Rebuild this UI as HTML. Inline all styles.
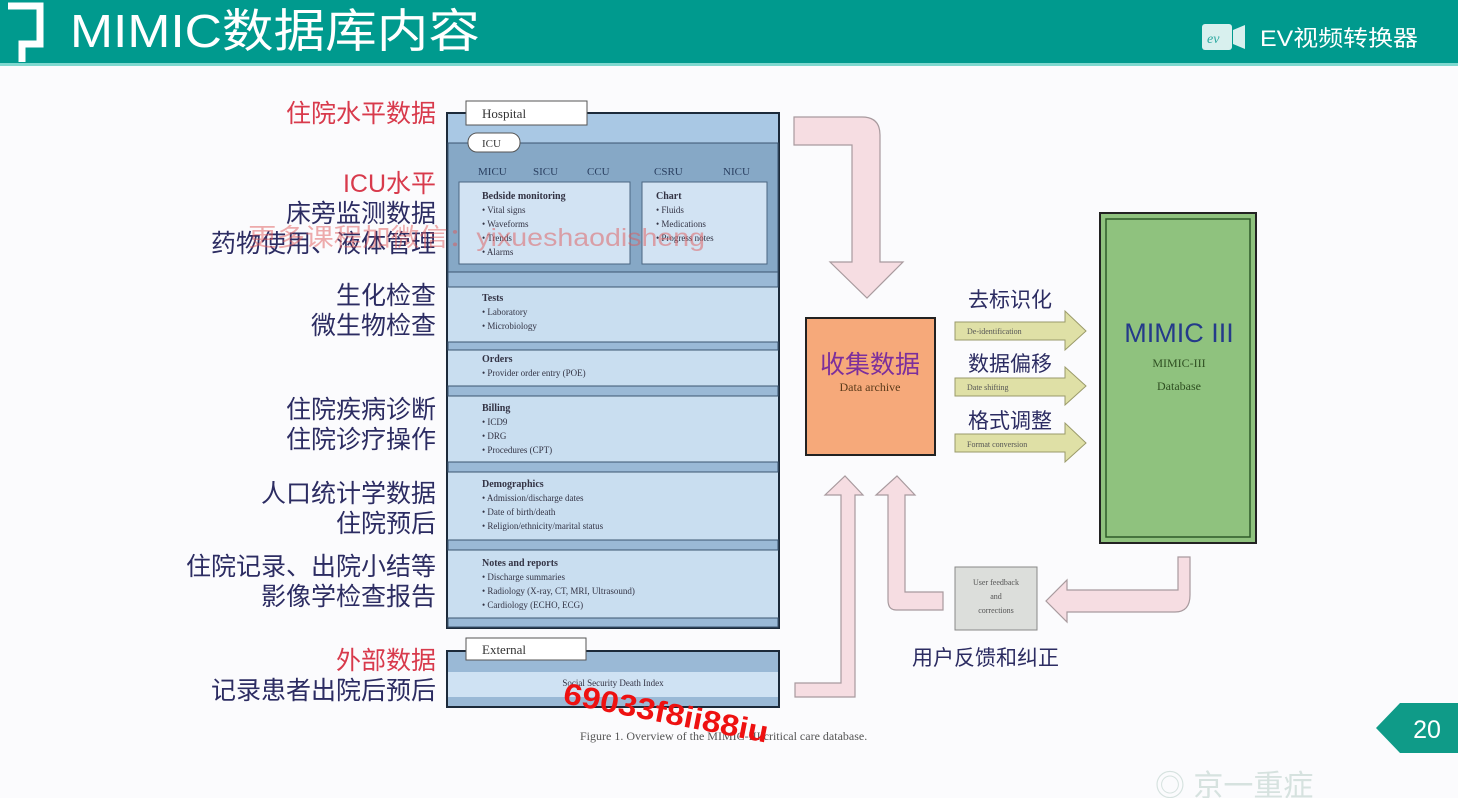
<!DOCTYPE html>
<html><head><meta charset="utf-8"><style>
html,body{margin:0;padding:0;background:#fbfbfd;}
svg{display:block}
.cj{font-family:"Liberation Sans","Noto Sans CJK SC",sans-serif}
.sf{font-family:"Liberation Serif",serif}
</style></head><body>
<svg width="1458" height="798" viewBox="0 0 1458 798" xmlns="http://www.w3.org/2000/svg">
<rect width="1458" height="798" fill="#fbfbfd"/>
<!-- header -->
<rect width="1458" height="63" fill="#009a8e"/>
<rect y="63" width="1458" height="3" fill="#7fd8cf"/>
<path d="M8 6 H40 V44 H22 V62" fill="none" stroke="#fff" stroke-width="7"/>
<text x="70" y="47" class="cj" font-size="46" fill="#fff" textLength="410" lengthAdjust="spacingAndGlyphs">MIMIC数据库内容</text>
<rect x="1202" y="24" width="30" height="26" rx="3" fill="#d8f0ee"/>
<text x="1207" y="43" font-family="Liberation Serif" font-style="italic" font-size="14" fill="#2aa8a0">ev</text>
<path d="M1233 30 L1245 25 V49 L1233 44Z" fill="#d8f0ee"/>
<text x="1260" y="46" class="cj" font-size="22" fill="#fff" textLength="158" lengthAdjust="spacingAndGlyphs">EV视频转换器</text>

<!-- left labels -->
<g class="cj" font-size="25" text-anchor="end" fill="#2c2c62">
<text x="436" y="122" fill="#d83a4c">住院水平数据</text>
<text x="436" y="192" fill="#d83a4c">ICU水平</text>
<text x="436" y="222">床旁监测数据</text>
<text x="436" y="252">药物使用、液体管理</text>
<text x="436" y="304">生化检查</text>
<text x="436" y="334">微生物检查</text>
<text x="436" y="418">住院疾病诊断</text>
<text x="436" y="448">住院诊疗操作</text>
<text x="436" y="502">人口统计学数据</text>
<text x="436" y="532">住院预后</text>
<text x="436" y="575">住院记录、出院小结等</text>
<text x="436" y="605">影像学检查报告</text>
<text x="436" y="669" fill="#d83a4c">外部数据</text>
<text x="436" y="699">记录患者出院后预后</text>
</g>

<!-- hospital diagram -->
<rect x="447" y="113" width="332" height="515" fill="#c9def0" stroke="#1c2a3a" stroke-width="2"/>
<rect x="448" y="114" width="330" height="30" fill="#a9c8e4"/>
<rect x="448" y="143" width="330" height="129" fill="#86a8c6" stroke="#3c5570" stroke-width="1"/>
<g fill="#9ab9d6" stroke="#3c5570" stroke-width="1">
<rect x="448" y="272" width="330" height="15"/>
<rect x="448" y="342" width="330" height="8"/>
<rect x="448" y="386" width="330" height="10"/>
<rect x="448" y="462" width="330" height="10"/>
<rect x="448" y="540" width="330" height="10"/>
<rect x="448" y="618" width="330" height="9"/>
</g>
<rect x="466" y="101" width="121" height="24" fill="#fff" stroke="#555" stroke-width="1"/>
<text x="482" y="118" class="sf" font-size="13" fill="#333">Hospital</text>
<rect x="468" y="133" width="52" height="19" rx="9" fill="#fff" stroke="#555"/>
<text x="482" y="147" class="sf" font-size="11" fill="#333">ICU</text>
<g class="sf" font-size="11" fill="#2a3f60">
<text x="478" y="175">MICU</text><text x="533" y="175">SICU</text><text x="587" y="175">CCU</text><text x="654" y="175">CSRU</text><text x="723" y="175">NICU</text>
</g>
<rect x="459" y="182" width="171" height="82" fill="#d2e3f3" stroke="#4a6682"/>
<rect x="642" y="182" width="125" height="82" fill="#d2e3f3" stroke="#4a6682"/>
<g class="sf" font-size="9" fill="#334">
<text x="482" y="199" font-weight="bold" font-size="10">Bedside monitoring</text>
<text x="482" y="213">• Vital signs</text><text x="482" y="227">• Waveforms</text><text x="482" y="241">• Trends</text><text x="482" y="255">• Alarms</text>
<text x="656" y="199" font-weight="bold" font-size="10">Chart</text>
<text x="656" y="213">• Fluids</text><text x="656" y="227">• Medications</text><text x="656" y="241">• Progress notes</text>
<text x="482" y="301" font-weight="bold" font-size="10">Tests</text>
<text x="482" y="315">• Laboratory</text><text x="482" y="329">• Microbiology</text>
<text x="482" y="362" font-weight="bold" font-size="10">Orders</text>
<text x="482" y="376">• Provider order entry (POE)</text>
<text x="482" y="411" font-weight="bold" font-size="10">Billing</text>
<text x="482" y="425">• ICD9</text><text x="482" y="439">• DRG</text><text x="482" y="453">• Procedures (CPT)</text>
<text x="482" y="487" font-weight="bold" font-size="10">Demographics</text>
<text x="482" y="501">• Admission/discharge dates</text><text x="482" y="515">• Date of birth/death</text><text x="482" y="529">• Religion/ethnicity/marital status</text>
<text x="482" y="566" font-weight="bold" font-size="10">Notes and reports</text>
<text x="482" y="580">• Discharge summaries</text><text x="482" y="594">• Radiology (X-ray, CT, MRI, Ultrasound)</text><text x="482" y="608">• Cardiology (ECHO, ECG)</text>
</g>
<!-- external -->
<rect x="447" y="651" width="332" height="56" fill="#9ab9d6" stroke="#1c2a3a" stroke-width="2"/>
<rect x="448" y="672" width="330" height="25" fill="#cfe2f3"/>
<rect x="466" y="638" width="120" height="22" fill="#fff" stroke="#555"/>
<text x="482" y="654" class="sf" font-size="13" fill="#333">External</text>
<text x="613" y="686" class="sf" font-size="9" fill="#334" text-anchor="middle">Social Security Death Index</text>
<text x="580" y="740" class="sf" font-size="12" fill="#555">Figure 1. Overview of the MIMIC-III critical care database.</text>

<!-- pink arrows -->
<g fill="#f6dde2" stroke="#a89a9e" stroke-width="1.2">
<path d="M794 117 H862 Q880 117 880 135 V262 H903 L867 298 L830 262 H852 V145 H794 Z"/>
<path d="M795 697 V683 H841 V495 H825 L845 476 L863 495 H855 V697 Z"/>
<path d="M943 592 V610 H896 Q888 610 888 600 V495 H876 L897 476 L915 495 H905 V592 Z"/>
<path d="M1178 557 H1190 V595 Q1190 612 1175 612 H1067 V622 L1046 601 L1067 580 V590 H1178 Z"/>
</g>
<!-- orange box -->
<rect x="806" y="318" width="129" height="137" fill="#f6a97a" stroke="#222" stroke-width="2"/>
<text x="870" y="373" class="cj" font-size="25" fill="#7c2f9c" text-anchor="middle">收集数据</text>
<text x="870" y="391" class="sf" font-size="12" fill="#5a3a1a" text-anchor="middle">Data archive</text>
<!-- yellow arrows -->
<g fill="#dfe0a6" stroke="#9a9a6a" stroke-width="1">
<path d="M955 322 H1065 V311 L1086 331 L1065 350 V340 H955Z"/>
<path d="M955 378 H1065 V367 L1086 386 L1065 405 V396 H955Z"/>
<path d="M955 434 H1065 V423 L1086 443 L1065 462 V452 H955Z"/>
</g>
<g class="sf" font-size="8" fill="#555">
<text x="967" y="334">De-identification</text><text x="967" y="390">Date shifting</text><text x="967" y="447">Format conversion</text>
</g>
<g class="cj" font-size="21" fill="#2c2c62">
<text x="968" y="307">去标识化</text><text x="968" y="371">数据偏移</text><text x="968" y="428">格式调整</text>
<text x="912" y="665">用户反馈和纠正</text>
</g>
<!-- green box -->
<rect x="1100" y="213" width="156" height="330" fill="#8fc27e" stroke="#222" stroke-width="2"/>
<rect x="1106" y="219" width="144" height="318" fill="none" stroke="#2e5a28" stroke-width="1.5"/>
<text x="1179" y="342" font-family="Liberation Sans,sans-serif" font-size="27" fill="#243a8a" text-anchor="middle">MIMIC III</text>
<text x="1179" y="367" class="sf" font-size="12" fill="#2f4f22" text-anchor="middle">MIMIC-III</text>
<text x="1179" y="390" class="sf" font-size="12" fill="#2f4f22" text-anchor="middle">Database</text>
<!-- feedback box -->
<rect x="955" y="567" width="82" height="63" fill="#dcdedb" stroke="#888"/>
<g class="sf" font-size="8" fill="#555" text-anchor="middle">
<text x="996" y="585">User feedback</text><text x="996" y="599">and</text><text x="996" y="613">corrections</text>
</g>
<!-- page num -->
<path d="M1400 703 H1458 V753 H1400 L1376 728 Z" fill="#0f9b88"/>
<text x="1427" y="738" font-family="Liberation Sans,sans-serif" font-size="25" fill="#fff" text-anchor="middle">20</text>
<text x="1155" y="796" class="cj" font-size="30" fill="#d6e2df">◎ 京一重症</text>
<!-- watermarks -->
<text x="248" y="246" class="cj" font-size="25" fill="#e05a5a" fill-opacity="0.5" textLength="457" lengthAdjust="spacingAndGlyphs">更多课程加微信：yixueshaodisheng</text>
<text x="562" y="703" transform="rotate(11 562 703)" font-family="Liberation Sans,sans-serif" font-size="30" font-weight="bold" fill="#ee1111" textLength="208" lengthAdjust="spacingAndGlyphs">69033f8ii88iu</text>
</svg>
</body></html>
